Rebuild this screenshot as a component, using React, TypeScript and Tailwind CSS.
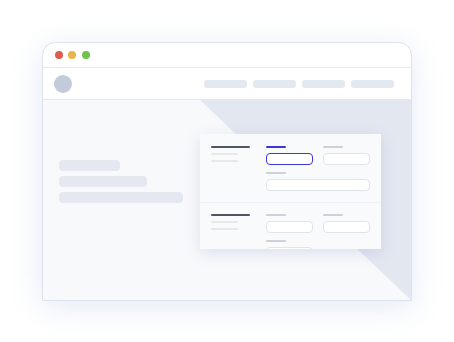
import React from 'react';

function Field({ active = false, wide = false }: { active?: boolean; wide?: boolean }) {
  return (
    <div className={wide ? 'col-span-2' : ''}>
      <div className={`h-[2px] w-[20px] rounded-full ${active ? 'bg-[#3b36dc]' : 'bg-[#cdd0d6]'}`} />
      <div
        className={`mt-[4.5px] h-[12.5px] rounded-[4px] bg-white ${
          active ? 'border-[1.5px] border-[#3b36dc]' : 'border border-[#e1e4e9]'
        }`}
      />
    </div>
  );
}

function Section({ first = false }: { first?: boolean }) {
  return (
    <div className={`flex pl-[11px] ${first ? 'pt-[12px] pb-[11px] border-b border-[#eff1f4]' : 'pt-[11px]'}`}>
      <div className="w-[55px] shrink-0">
        <div className="h-[2px] w-[39px] rounded-full bg-[#4f5564]" />
        <div className="mt-[4.5px] h-[2px] w-[27px] rounded-full bg-[#e6e8ec]" />
        <div className="mt-[5px] h-[2px] w-[27px] rounded-full bg-[#e6e8ec]" />
      </div>
      <div className="grid w-[104px] grid-cols-2 gap-x-[10px] gap-y-[7px]">
        <Field active={first} />
        <Field />
        <Field wide={first} />
      </div>
    </div>
  );
}

export default function App() {
  return (
    <div className="h-[342px] w-[454px] overflow-hidden bg-white pl-[42px] pt-[42px]">
      <div className="flex h-[259px] w-[370px] flex-col overflow-hidden rounded-t-[13px] border border-[#dde2eb] bg-white shadow-[0_6px_30px_rgba(140,165,225,0.24)]">
        {/* title bar */}
        <div className="flex h-[25px] shrink-0 items-center gap-[5.5px] border-b border-[#e3e7ee] pl-[11.5px]">
          <span className="h-[8px] w-[8px] rounded-full bg-[#dd5b4f]" />
          <span className="h-[8px] w-[8px] rounded-full bg-[#e9b54a]" />
          <span className="h-[8px] w-[8px] rounded-full bg-[#6fc24b]" />
        </div>
        {/* nav */}
        <div className="flex h-[32px] shrink-0 items-center border-b border-[#e3e7ee] pl-[11px] pr-[17px]">
          <div className="h-[18px] w-[18px] rounded-full bg-[#c3cad9]" />
          <div className="ml-auto flex gap-[6px]">
            <div className="h-[8px] w-[43px] rounded-[3px] bg-[#e4e8f0]" />
            <div className="h-[8px] w-[43px] rounded-[3px] bg-[#e4e8f0]" />
            <div className="h-[8px] w-[43px] rounded-[3px] bg-[#e4e8f0]" />
            <div className="h-[8px] w-[43px] rounded-[3px] bg-[#e4e8f0]" />
          </div>
        </div>
        {/* content */}
        <div className="relative flex flex-1 items-start bg-[#f8f9fb] pl-[16px]">
          <svg className="absolute inset-0 h-full w-full" viewBox="0 0 368 200" preserveAspectRatio="none">
            <polygon points="157,0 368,0 368,200" fill="#e3e7f0" />
          </svg>
          <div className="relative mt-[60px] flex w-[141px] shrink-0 flex-col gap-[5.5px]">
            <div className="h-[10.5px] w-[61px] rounded-[4px] bg-[#e4e8f0]" />
            <div className="h-[10.5px] w-[88px] rounded-[4px] bg-[#e4e8f0]" />
            <div className="h-[10.5px] w-[124px] rounded-[4px] bg-[#e4e8f0]" />
          </div>
          <div className="relative mt-[34px] h-[115px] w-[181px] overflow-hidden bg-[#f9fafb] shadow-[0_4px_14px_rgba(120,140,190,0.22)]">
            <Section first />
            <Section />
          </div>
        </div>
      </div>
    </div>
  );
}
